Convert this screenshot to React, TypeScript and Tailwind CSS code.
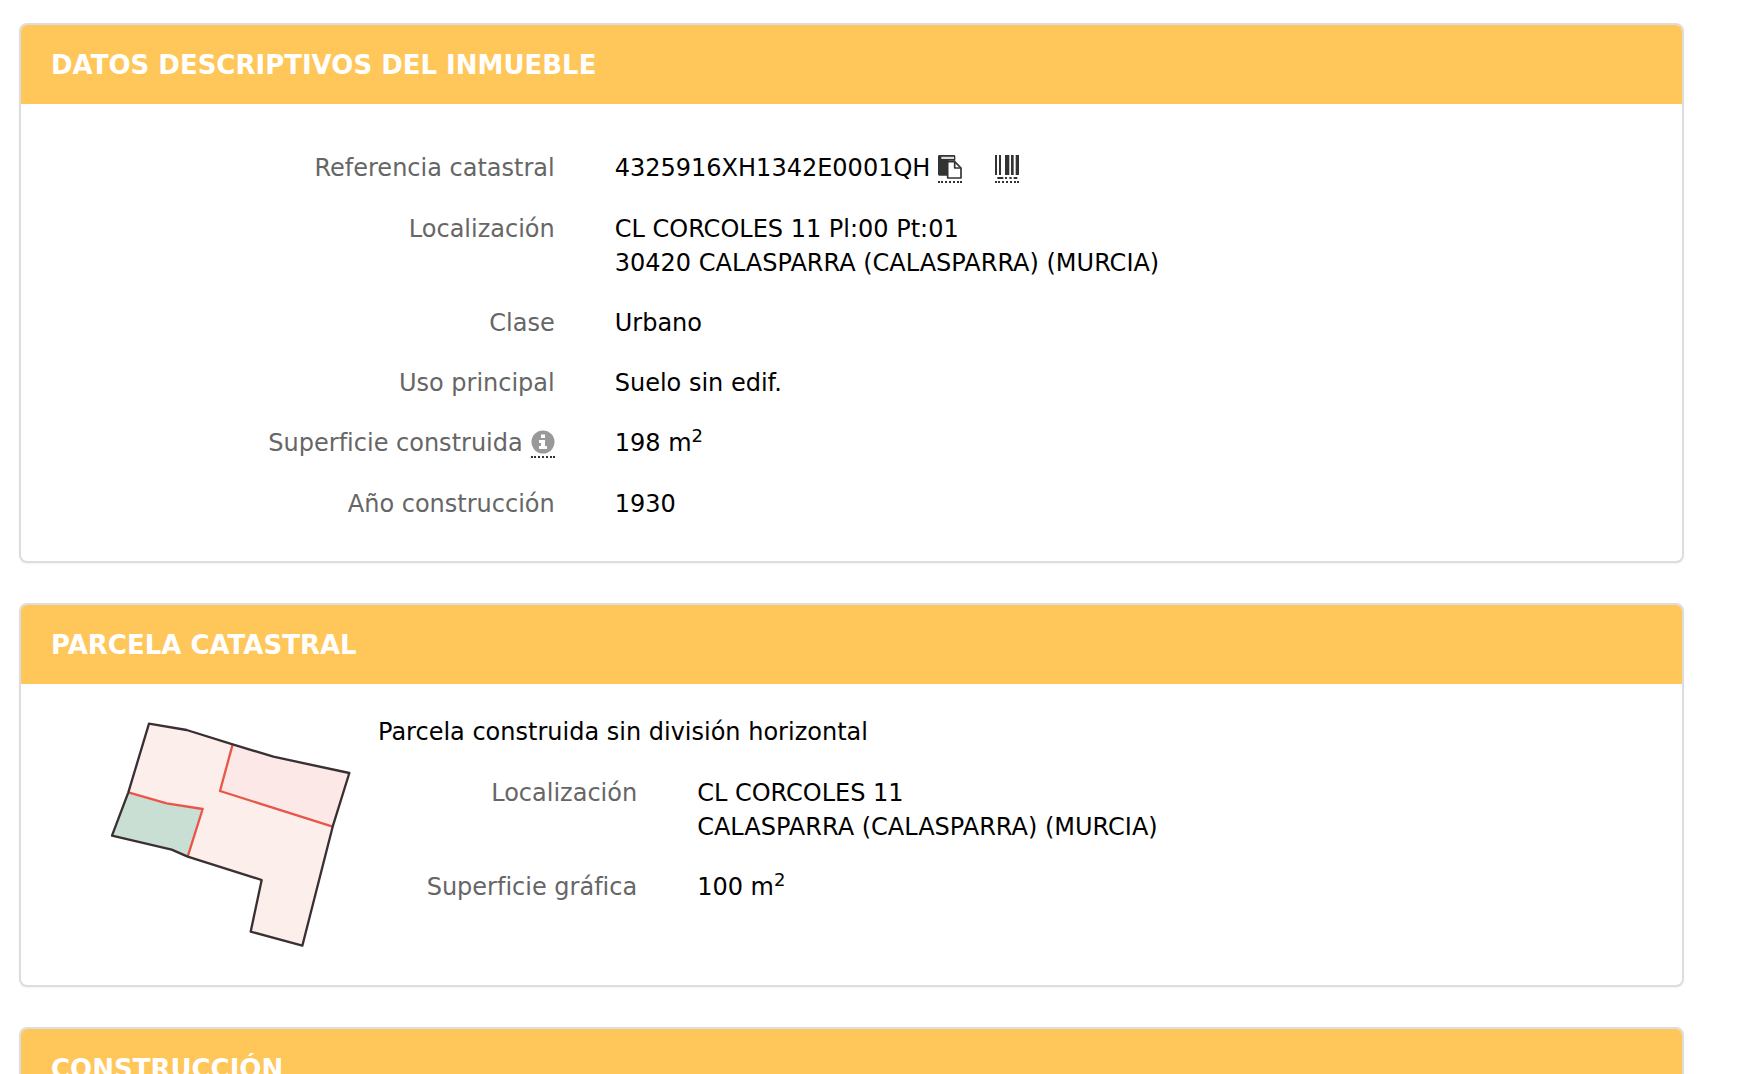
import React from 'react';

type RowProps = {
  label: React.ReactNode;
  children: React.ReactNode;
};

function Card({ title, children }: { title: string; children?: React.ReactNode }) {
  return (
    <section className="overflow-hidden rounded-lg border-2 border-[#dddddd] bg-white shadow-xs">
      <h2 className="bg-[#ffc65a] px-[30px] pt-[23px] pb-[21px] text-[26px] leading-[35px] font-bold text-white">
        {title}
      </h2>
      {children}
    </section>
  );
}

function Row({ label, children }: RowProps) {
  return (
    <>
      <dt className="pr-[31px] text-right text-[#666666]">{label}</dt>
      <dd className="pl-[29px] text-black">{children}</dd>
    </>
  );
}

function SquareMeters({ value }: { value: string }) {
  return (
    <span>
      {value} m<sup className="text-[18px]">2</sup>
    </span>
  );
}

function CopyIcon() {
  return (
    <svg viewBox="0 0 72 72" className="h-6 w-6" aria-hidden="true">
      <path d="M4 0h44a4 4 0 0 1 4 4v13H33a6 6 0 0 0-6 6v39H4a4 4 0 0 1-4-4V4a4 4 0 0 1 4-4z" fill="#333" />
      <path d="M10 5h38v7H10z" fill="#ddd" />
      <path d="M29 20h21l19 19v30H29z" fill="#fff" stroke="#333" strokeWidth="5" strokeLinejoin="round" />
      <path d="M50 20v19h19" fill="none" stroke="#333" strokeWidth="5" strokeLinejoin="round" />
    </svg>
  );
}

function BarcodeIcon() {
  return (
    <svg viewBox="0 0 72 72" className="h-6 w-6" fill="#333" aria-hidden="true">
      <path d="M0 0h6v60H0zM12 0h6v60h-6zM30 0h13v60H30zM48 0h8v60h-8zM62 0h10v60H62z" />
      <path d="M7 66h18v6H7zM30 66h6v6h-6zM43 66h7v6h-7zM56 66h11v6H56z" />
    </svg>
  );
}

function InfoIcon() {
  return (
    <svg viewBox="0 0 24 24" className="h-6 w-6" aria-hidden="true">
      <circle cx="12" cy="12" r="11.5" fill="#999" />
      <path d="M10 4.5h4v3.5h-4zM8 10h6v6h2v3H8v-3h2v-3H8z" fill="#fff" />
    </svg>
  );
}

function ParcelMap() {
  return (
    <svg viewBox="0 0 732 690" className="h-[230px] w-[244px]" role="img" aria-label="Croquis de la parcela">
      <g transform="translate(-60 -55)" strokeLinejoin="round">
        <path
          d="M177 66 290 85 428 128 550 165 778 214 728 375 637 732 482 690 515 535 293 465 245 444 66 402 115 272z"
          fill="#fceeea"
        />
        <path d="M428 128 550 165 778 214 728 375 390 268z" fill="#fce8e6" />
        <path d="M115 272 230 305 338 322 293 465 245 444 66 402z" fill="#c9dfd4" />
        <path
          d="M428 128 390 268 728 375M115 272 230 305 338 322 293 465"
          fill="none"
          stroke="#e8564a"
          strokeWidth="7"
        />
        <path
          d="M177 66 290 85 428 128 550 165 778 214 728 375 637 732 482 690 515 535 293 465 245 444 66 402 115 272z"
          fill="none"
          stroke="#3a3033"
          strokeWidth="7"
        />
      </g>
    </svg>
  );
}

const iconButton = 'mt-1 border-b-2 border-dotted border-[#333333] pb-[2px]';

export default function App() {
  return (
    <main className="flex h-screen flex-col gap-10 overflow-hidden bg-white pt-[23px] pr-[76px] pl-[19px] font-['Verdana','DejaVu_Sans',sans-serif] text-[24px] leading-[34px] [font-variant-ligatures:none] *:shrink-0">
      <Card title="DATOS DESCRIPTIVOS DEL INMUEBLE">
        <dl className="grid grid-cols-[34%_1fr] gap-y-[26px] pt-[47px] pb-10">
          <Row label="Referencia catastral">
            <div className="flex h-[35px] items-start">
              <span>4325916XH1342E0001QH</span>
              <button type="button" aria-label="Copiar referencia catastral" className={`${iconButton} ml-2`}>
                <CopyIcon />
              </button>
              <button type="button" aria-label="Código de barras" className={`${iconButton} ml-[33px]`}>
                <BarcodeIcon />
              </button>
            </div>
          </Row>
          <Row label="Localización">
            CL CORCOLES 11 Pl:00 Pt:01
            <br />
            30420 CALASPARRA (CALASPARRA) (MURCIA)
          </Row>
          <Row label="Clase">Urbano</Row>
          <Row label="Uso principal">Suelo sin edif.</Row>
          <Row
            label={
              <div className="flex h-[35px] items-start justify-end gap-2">
                <span>Superficie construida</span>
                <button type="button" aria-label="Información" className={iconButton}>
                  <InfoIcon />
                </button>
              </div>
            }
          >
            <SquareMeters value="198" />
          </Row>
          <Row label="Año construcción">1930</Row>
        </dl>
      </Card>

      <Card title="PARCELA CATASTRAL">
        <div className="flex pb-[35px]">
          <div className="w-[327px] shrink-0 pt-9 pl-[89px]">
            <ParcelMap />
          </div>
          <div className="grow pt-[31px]">
            <p className="pl-[30px] text-black">Parcela construida sin división horizontal</p>
            <dl className="mt-[27px] grid grid-cols-[24%_1fr] gap-y-[26px]">
              <Row label="Localización">
                CL CORCOLES 11
                <br />
                CALASPARRA (CALASPARRA) (MURCIA)
              </Row>
              <Row label="Superficie gráfica">
                <SquareMeters value="100" />
              </Row>
            </dl>
          </div>
        </div>
      </Card>

      <Card title="CONSTRUCCIÓN" />
    </main>
  );
}
